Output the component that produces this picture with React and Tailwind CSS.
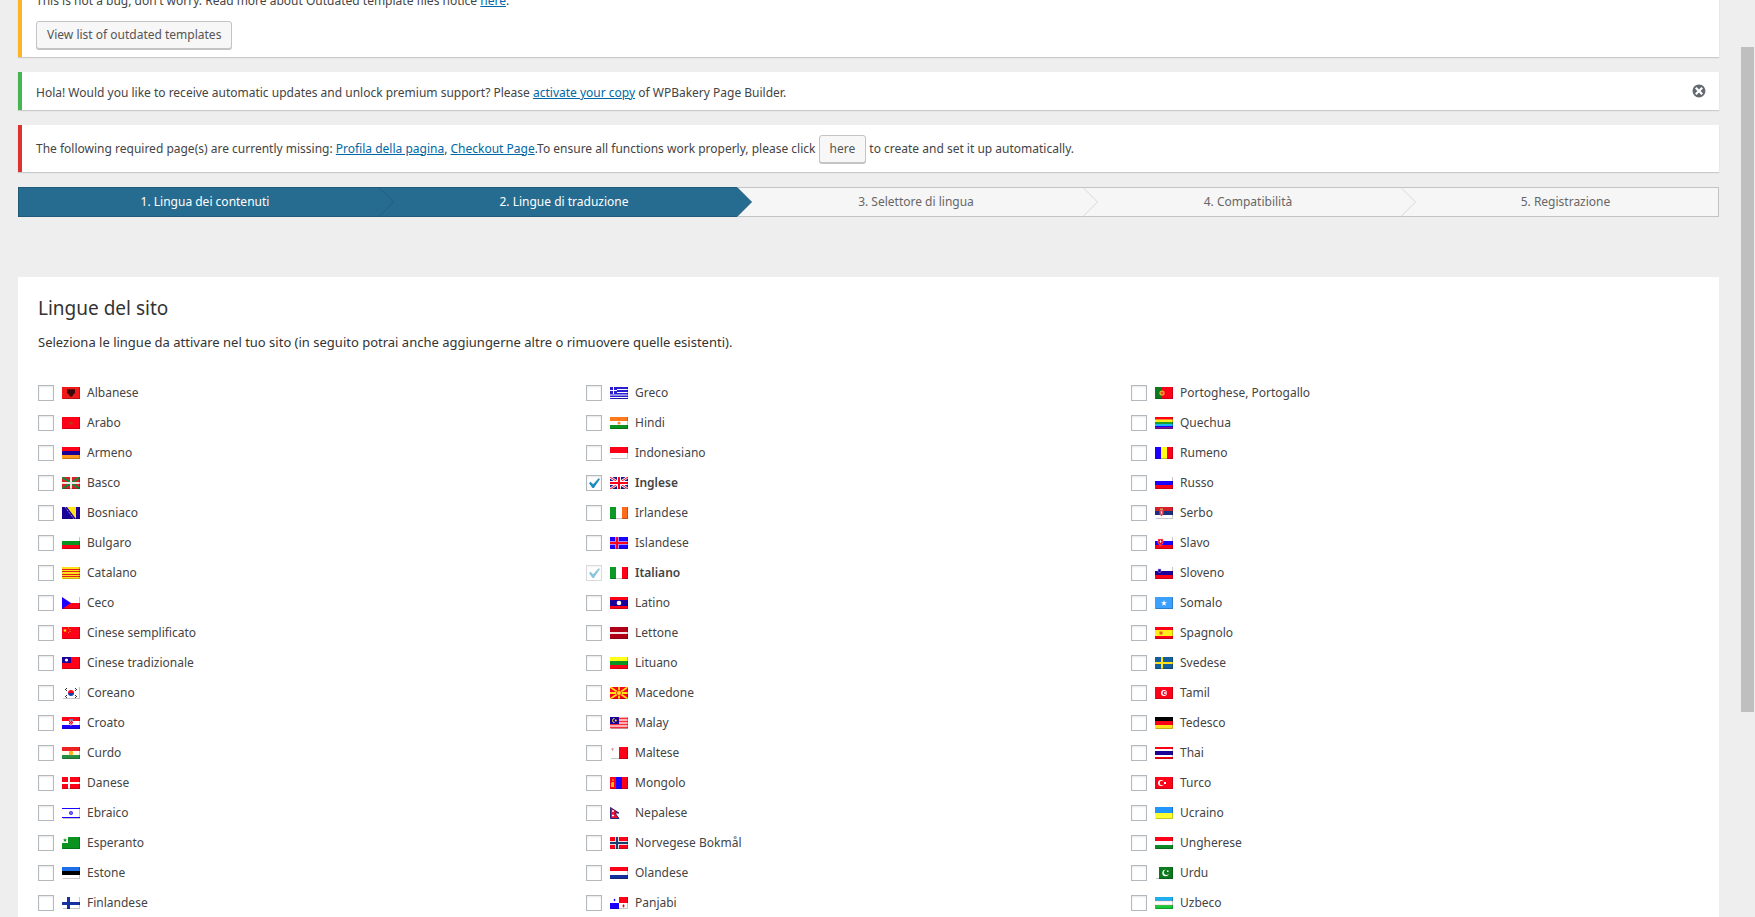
import React from "react";

const RED = "#ff0019";
const BLUE = "#1c00ff";
const NAVY = "#1a0099";
const GREEN = "#0b9320";
const WHITE = "#ffffff";

// horizontal bands
const H = ({ c }) =>
  c.map((fill, i) => (
    <rect
      key={i}
      y={(i * 12) / c.length}
      width="18"
      height={12 / c.length}
      fill={fill}
      shapeRendering="crispEdges"
    />
  ));

// vertical bands
const V = ({ c }) =>
  c.map((fill, i) => (
    <rect key={i} x={(i * 18) / c.length} width={18 / c.length} height="12" fill={fill} />
  ));

const Bg = ({ c }) => <rect width="18" height="12" fill={c} />;

const Cross = ({ c, x = 6, y = 5, w = 2 }) => (
  <>
    <rect x={x} width={w} height="12" fill={c} />
    <rect y={y} width="18" height={w} fill={c} />
  </>
);

const flags = {
  Albanese: (
    <>
      <Bg c="#f01818" />
      <path d="M5 2l1.500.8.5-.8h1l1 .8 1-.8h1l.5.8L13 2v4l-1 1-1 .5v1L9 10 7 8.500v-1L6 7 5 6z" fill="#3a0808" />
    </>
  ),
  Arabo: (
    <>
      <Bg c={RED} />
      <path d="M9 4l.8 1.500h1.700l-1.400 1 .6 1.700L9 7.200l-1.700 1 .6-1.700-1.400-1h1.700z" fill="#a04a10" />
    </>
  ),
  Armeno: <H c={[RED, NAVY, "#ff9a1c"]} />,
  Basco: (
    <>
      <Bg c="#dd1f26" />
      <path d="M0 0l18 12M18 0L0 12" stroke="#118a3b" strokeWidth="2" />
      <Cross c="#efe9e4" x={8} />
    </>
  ),
  Bosniaco: (
    <>
      <Bg c={NAVY} />
      <path d="M5 0h9v12z" fill="#ffe11c" />
      <path d="M3 0l9 12" stroke="#b9b9ee" strokeWidth="1" strokeDasharray="1 1" />
    </>
  ),
  Bulgaro: <H c={[WHITE, GREEN, RED]} />,
  Catalano: (
    <>
      <Bg c="#ffe119" />
      <path d="M0 2.500h18M0 4.500h18M0 7.500h18M0 9.500h18" stroke="#e02020" />
    </>
  ),
  Ceco: (
    <>
      <H c={[WHITE, RED]} />
      <path d="M0 0l9 6-9 6z" fill={BLUE} />
    </>
  ),
  "Cinese semplificato": (
    <>
      <Bg c={RED} />
      <path d="M3 1.500l.5 1.300H5L3.900 3.700l.4 1.300L3 4.200 1.700 5l.4-1.300L1 2.800h1.500z" fill="#ffe119" />
      <path d="M6 1h1M7.500 2.500h1M7.500 4.500h1M6 5.500h1" stroke="#ff9a1c" />
    </>
  ),
  "Cinese tradizionale": (
    <>
      <Bg c={RED} />
      <rect width="9" height="6" fill={NAVY} />
      <circle cx="4.500" cy="3" r="1.600" fill={WHITE} />
    </>
  ),
  Coreano: (
    <>
      <Bg c={WHITE} />
      <path d="M6 6a3 3 0 016 0z" fill={RED} />
      <path d="M6 6a3 3 0 006 0z" fill="#1440b0" />
      <path d="M3 3l2-2M4 4l1-1M13 1l2 2M13 3l1 1M3 9l2 2M4 8l1 1M13 11l2-2M13 9l1-1" stroke="#333" />
    </>
  ),
  Croato: (
    <>
      <H c={[RED, WHITE, BLUE]} />
      <path d="M7 2h4v5l-2 2-2-2z" fill="#f58a92" />
      <path d="M7 2h4v1.500H7z" fill="#5a7fc0" />
      <path d="M7 4h1v1H7zM9 4h1v1H9zM8 5h1v1H8zM10 5h1v1h-1zM7 6h1v1H7zM9 6h1v1H9z" fill={RED} />
    </>
  ),
  Curdo: (
    <>
      <H c={["#ed2024", "#fffbe8", "#278e43"]} />
      <circle cx="9" cy="6" r="2.200" fill="#f9b020" />
    </>
  ),
  Danese: (
    <>
      <Bg c={RED} />
      <Cross c={WHITE} />
    </>
  ),
  Ebraico: (
    <>
      <Bg c={WHITE} />
      <path d="M0 1.500h18M0 10.500h18" stroke={BLUE} />
      <path d="M9 4l1.700 3H7.300zM9 8L7.300 5h3.400z" stroke="#3b2bef" strokeWidth=".8" fill="none" />
    </>
  ),
  Esperanto: (
    <>
      <Bg c={GREEN} />
      <rect width="6" height="6" fill={WHITE} />
      <path d="M3 1l.6 1.400H5l-1.100 1 .5 1.500L3 4l-1.400.9.5-1.500-1.100-1h1.400z" fill={GREEN} />
    </>
  ),
  Estone: <H c={["#1e6ee8", "#000000", WHITE]} />,
  Finlandese: (
    <>
      <Bg c={WHITE} />
      <Cross c="#1631a0" x={5} w={3} />
    </>
  ),
  Greco: (
    <>
      <Bg c="#2a1fd0" />
      <path d="M0 2.500h18M0 5.500h18M0 8h18M0 10.500h18" stroke={WHITE} />
      <rect width="7" height="7" fill="#2a1fd0" />
      <path d="M3.500 0v7M0 3.500h7" stroke={WHITE} />
    </>
  ),
  Hindi: (
    <>
      <H c={["#ff7a1c", WHITE, GREEN]} />
      <circle cx="9" cy="6" r="1.600" fill="#ff8a3c" />
    </>
  ),
  Indonesiano: <H c={[RED, WHITE]} />,
  Inglese: (
    <>
      <Bg c="#1c1a8c" />
      <path d="M0 0l18 12M18 0L0 12" stroke={WHITE} strokeWidth="2.600" />
      <path d="M0 0l18 12M18 0L0 12" stroke={RED} strokeWidth="1" />
      <path d="M9 0v12M0 6h18" stroke={WHITE} strokeWidth="4" />
      <path d="M9 0v12M0 6h18" stroke={RED} strokeWidth="2" />
    </>
  ),
  Irlandese: <V c={["#0b9a25", WHITE, "#ff6a1c"]} />,
  Islandese: (
    <>
      <Bg c={BLUE} />
      <Cross c="#a58cf5" x={5} y={4} w={4} />
      <Cross c={RED} x={6} y={5} w={2} />
    </>
  ),
  Italiano: <V c={["#0b9a25", WHITE, RED]} />,
  Latino: (
    <>
      <Bg c={RED} />
      <rect y="3" width="18" height="6" fill={NAVY} />
      <circle cx="9" cy="6" r="2.300" fill={WHITE} />
    </>
  ),
  Lettone: (
    <>
      <Bg c="#b00018" />
      <rect y="5" width="18" height="2" fill="#f4e6e8" />
    </>
  ),
  Lituano: <H c={["#ffff19", GREEN, RED]} />,
  Macedone: (
    <>
      <Bg c={RED} />
      <path d="M0 0l18 12M18 0L0 12M9 0v12M0 6h18" stroke="#ffe119" strokeWidth="1.800" />
      <circle cx="9" cy="6" r="2.500" fill="#ffe119" stroke={RED} strokeWidth=".8" />
    </>
  ),
  Malay: (
    <>
      <Bg c="#ffb0b4" />
      <path d="M0 1.500h18M0 4.500h18M0 7.500h18M0 10.500h18" stroke="#f5303c" />
      <rect width="9" height="7" fill={NAVY} />
      <path d="M4.500 1.500a2 2 0 100 4" stroke="#ffe119" fill="none" />
      <circle cx="5.800" cy="3.500" r="1" fill="#ffe119" />
    </>
  ),
  Maltese: (
    <>
      <V c={[WHITE, RED]} />
      <path d="M1 2h3M2.500 1v3" stroke="#e0a0a0" />
    </>
  ),
  Mongolo: (
    <>
      <V c={[RED, BLUE, RED]} />
      <path d="M2 5h2v5H1V6zM2.500 2h1v2h-1z" fill="#ffb31c" />
    </>
  ),
  Nepalese: (
    <>
      <path d="M.5.500L9 6H5l4 5.500H.5z" fill="#e0143c" stroke="#1c1a6c" strokeWidth=".9" />
      <path d="M2 4h2M2 8.500h2" stroke={WHITE} strokeWidth="1.400" />
    </>
  ),
  "Norvegese Bokmål": (
    <>
      <Bg c={RED} />
      <Cross c="#e8dce8" x={5} y={4} w={4} />
      <Cross c="#1c3c6c" x={6} y={5} w={2} />
    </>
  ),
  Olandese: <H c={[RED, WHITE, "#14309c"]} />,
  Panjabi: (
    <>
      <Bg c={WHITE} />
      <rect x="9" width="9" height="6" fill={RED} />
      <rect y="6" width="9" height="6" fill={BLUE} />
      <path d="M4.500 1.500l1 1.500-1 1.500-1-1.500z" fill={BLUE} />
      <path d="M13.500 7l1.200 2-1.200 1.700L12.300 9z" fill={RED} />
    </>
  ),
  "Portoghese, Portogallo": (
    <>
      <Bg c={RED} />
      <rect width="7" height="12" fill="#0b7a20" />
      <circle cx="7" cy="6" r="2.600" fill="#e8c020" />
      <circle cx="7" cy="6" r="1.500" fill="#f04030" />
    </>
  ),
  Quechua: <H c={[RED, "#ff8a1c", "#ffee19", "#19a030", "#19b8f0", BLUE, "#80109c"]} />,
  Rumeno: <V c={[BLUE, "#ffff19", RED]} />,
  Russo: <H c={[WHITE, BLUE, RED]} />,
  Serbo: (
    <>
      <H c={["#d8202c", "#1c3080", WHITE]} />
      <path d="M4.500 3h4v4l-2 2.500-2-2.500z" fill="#d85060" />
      <rect x="5" y="1.500" width="3" height="1.500" fill="#d0a050" />
      <rect x="6" y="4.500" width="1" height="2" fill={WHITE} />
    </>
  ),
  Slavo: (
    <>
      <H c={[WHITE, BLUE, RED]} />
      <path d="M3 2h5v4L5.500 9 3 6z" fill={RED} stroke="#f0a0a8" strokeWidth=".5" />
      <path d="M5.500 3v3M4.500 4.500h2" stroke={WHITE} strokeWidth=".7" />
    </>
  ),
  Sloveno: (
    <>
      <H c={[WHITE, NAVY, RED]} />
      <path d="M3 2h3v2.500L4.500 6 3 4.500z" fill={NAVY} stroke="#b0a8e0" strokeWidth=".6" />
    </>
  ),
  Somalo: (
    <>
      <Bg c="#3ba0ff" />
      <path d="M9 3l.8 2.200H12l-1.800 1.300.7 2.200L9 7.400 7.100 8.700l.7-2.200L6 5.200h2.200z" fill={WHITE} />
    </>
  ),
  Spagnolo: (
    <>
      <Bg c={RED} />
      <rect y="3" width="18" height="6" fill="#ffee19" />
      <path d="M4.500 4.500h3v3h-3z" fill="#e06020" />
    </>
  ),
  Svedese: (
    <>
      <Bg c="#145f9c" />
      <Cross c="#ffe01c" />
    </>
  ),
  Tamil: (
    <>
      <Bg c={RED} />
      <circle cx="9" cy="6" r="3" fill={WHITE} />
      <circle cx="9.500" cy="6" r="2" fill={RED} />
      <circle cx="10" cy="6" r="1" fill={WHITE} />
    </>
  ),
  Tedesco: <H c={["#000000", RED, "#ffe01c"]} />,
  Thai: <H c={[RED, WHITE, NAVY, NAVY, WHITE, RED]} />,
  Turco: (
    <>
      <Bg c={RED} />
      <circle cx="6" cy="6" r="3" fill={WHITE} />
      <circle cx="7" cy="6" r="2.300" fill={RED} />
      <rect x="9" y="5" width="2" height="2" fill={WHITE} />
    </>
  ),
  Ucraino: <H c={["#2196ff", "#ffff30"]} />,
  Ungherese: <H c={[RED, WHITE, "#0b8a25"]} />,
  Urdu: (
    <>
      <Bg c={WHITE} />
      <rect x="4" width="14" height="12" fill="#0b7a1c" />
      <circle cx="10.500" cy="6" r="3.200" fill={WHITE} />
      <circle cx="11.500" cy="5.300" r="2.600" fill="#0b7a1c" />
      <rect x="12" y="3.500" width="1.500" height="1.500" fill={WHITE} />
    </>
  ),
  Uzbeco: (
    <>
      <H c={["#1cb0f0", WHITE, "#14c838"]} />
      <path d="M0 4h18M0 8h18" stroke="#e88" strokeWidth=".4" />
    </>
  ),
};

const names = Object.keys(flags);
const columns = [names.slice(0, 18), names.slice(18, 36), names.slice(36)];
const checked = ["Inglese", "Italiano"];

const steps = [
  { label: "1. Lingua dei contenuti", done: true, nextDone: true },
  { label: "2. Lingue di traduzione", done: true },
  { label: "3. Selettore di lingua" },
  { label: "4. Compatibilità" },
  { label: "5. Registrazione" },
];

const Flag = ({ name }) => (
  <svg viewBox="0 0 18 12" className="h-3 w-[18px] shrink-0" aria-hidden="true">
    {flags[name]}
    {name !== "Nepalese" && (
      <path d="M17.500 0v11.500H1" stroke="#000" strokeOpacity=".22" fill="none" />
    )}
  </svg>
);

const Language = ({ name }) => {
  const isChecked = checked.includes(name);
  const isDefault = name === "Italiano";

  return (
    <li className="flex h-[30px] items-center">
      <label className="flex items-center">
        <span className={`relative mr-2 h-4 w-4 ${isDefault ? "opacity-50" : ""}`}>
          <input
            type="checkbox"
            defaultChecked={isChecked}
            disabled={isDefault}
            className="peer block h-4 w-4 appearance-none border border-[#b4b9be] bg-white shadow-[inset_0_1px_2px_rgba(0,0,0,0.1)]"
          />
          <svg
            viewBox="0 0 20 20"
            className="pointer-events-none absolute -left-[3px] -top-[2px] hidden h-[21px] w-[21px] fill-[#1e8cbe] peer-checked:block"
          >
            <path d="M14.830 4.890l1.340.94-5.810 8.380H9.020L5.780 9.670l1.340-1.250 2.570 2.400z" />
          </svg>
        </span>
        <Flag name={name} />
        <span className={`ml-[7px] ${isChecked ? "font-semibold" : ""}`}>{name}</span>
      </label>
    </li>
  );
};

const Notice = ({ className, children }) => (
  <div
    className={`border-l-4 bg-white pl-[14px] pr-3 shadow-[0_1px_1px_rgba(0,0,0,0.15)] ${className}`}
  >
    {children}
  </div>
);

const Link = ({ children }) => (
  <a href="#" className="text-[#0068a5] underline">
    {children}
  </a>
);

const Button = ({ children, className = "" }) => (
  <button
    type="button"
    className={`h-7 rounded-[3px] border border-[#c4c4c4] bg-[#f7f7f7] px-[10px] text-[#555] shadow-[0_1px_0_#c4c4c4] ${className}`}
  >
    {children}
  </button>
);

const App = () => {
  return (
    <div className="relative h-screen overflow-hidden bg-[#eeeeee] pl-[18px] pr-9 font-['Noto_Sans','Open_Sans',sans-serif] text-[12px] leading-[18px] text-[#444]">
      {/* Notices */}
      <Notice className="-mt-2 border-l-[#ffb428] pb-[7px]">
        <p className="mb-[11px]">
          This is not a bug, don't worry. Read more about Outdated template files notice{" "}
          <Link>here</Link>.
        </p>
        <Button className="mb-px block">View list of outdated templates</Button>
      </Notice>

      <Notice className="mt-[15px] flex h-[38px] items-center justify-between border-l-[#46b450]">
        <p className="pt-1">
          Hola! Would you like to receive automatic updates and unlock premium support? Please{" "}
          <Link>activate your copy</Link> of WPBakery Page Builder.
        </p>
        <button type="button" aria-label="Chiudi">
          <svg viewBox="0 0 20 20" className="h-4 w-4 fill-[#646970]">
            <path d="M10 2c4.420 0 8 3.580 8 8s-3.580 8-8 8-8-3.580-8-8 3.580-8 8-8zm5 11l-3-3 3-3-2-2-3 3-3-3-2 2 3 3-3 3 2 2 3-3 3 3z" />
          </svg>
        </button>
      </Notice>

      <Notice className="mt-[15px] flex h-[47px] items-center border-l-[#dc3232]">
        <p>
          The following required page(s) are currently missing: <Link>Profila della pagina</Link>,{" "}
          <Link>Checkout Page</Link>.To ensure all functions work properly, please click{" "}
          <Button>here</Button> to create and set it up automatically.
        </p>
      </Notice>

      {/* Wizard steps */}
      <ol className="mt-[15px] grid grid-cols-[361fr_358fr_346fr_318fr_318fr] text-center">
        {steps.map((step, i) => (
          <li
            key={step.label}
            className={`relative flex h-[30px] items-center justify-center border-y pl-3 first:border-l last:border-r ${
              step.done
                ? "border-[#1f5a78] bg-[#266c90] text-white"
                : "border-[#c4c4c4] bg-[#f6f6f6] text-[#666]"
            }`}
          >
            {step.label}
            {i < steps.length - 1 && (
              <svg
                viewBox="0 0 15 30"
                className={`absolute -top-px left-full z-10 h-[30px] w-[15px] ${
                  step.done ? "fill-[#266c90]" : "fill-[#f6f6f6]"
                } ${step.done ? "stroke-[#1f5a78]" : "stroke-[#d8d8d8]"}`}
              >
                <path d="M0 .5L14.500 15 0 29.500" strokeOpacity={step.nextDone ? 0.7 : 1} />
              </svg>
            )}
          </li>
        ))}
      </ol>

      {/* Languages */}
      <section className="mt-[60px] bg-white px-5 pb-10 pt-[18px] text-[#444]">
        <h2 className="text-[19px] leading-[26px] text-[#333]">Lingue del sito</h2>
        <p className="mt-[11px] text-[13px] leading-5 text-[#333]">
          Seleziona le lingue da attivare nel tuo sito (in seguito potrai anche aggiungerne altre o
          rimuovere quelle esistenti).
        </p>
        <div className="mt-[26px] grid grid-cols-[548fr_545fr_568fr]">
          {columns.map((column, i) => (
            <ul key={i}>
              {column.map((name) => (
                <Language key={name} name={name} />
              ))}
            </ul>
          ))}
        </div>
      </section>

      {/* Page scrollbar thumb */}
      <div className="absolute right-px top-[47px] h-[665px] w-[13px] bg-[#bfbfbf]" />
    </div>
  );
};

export default App;
